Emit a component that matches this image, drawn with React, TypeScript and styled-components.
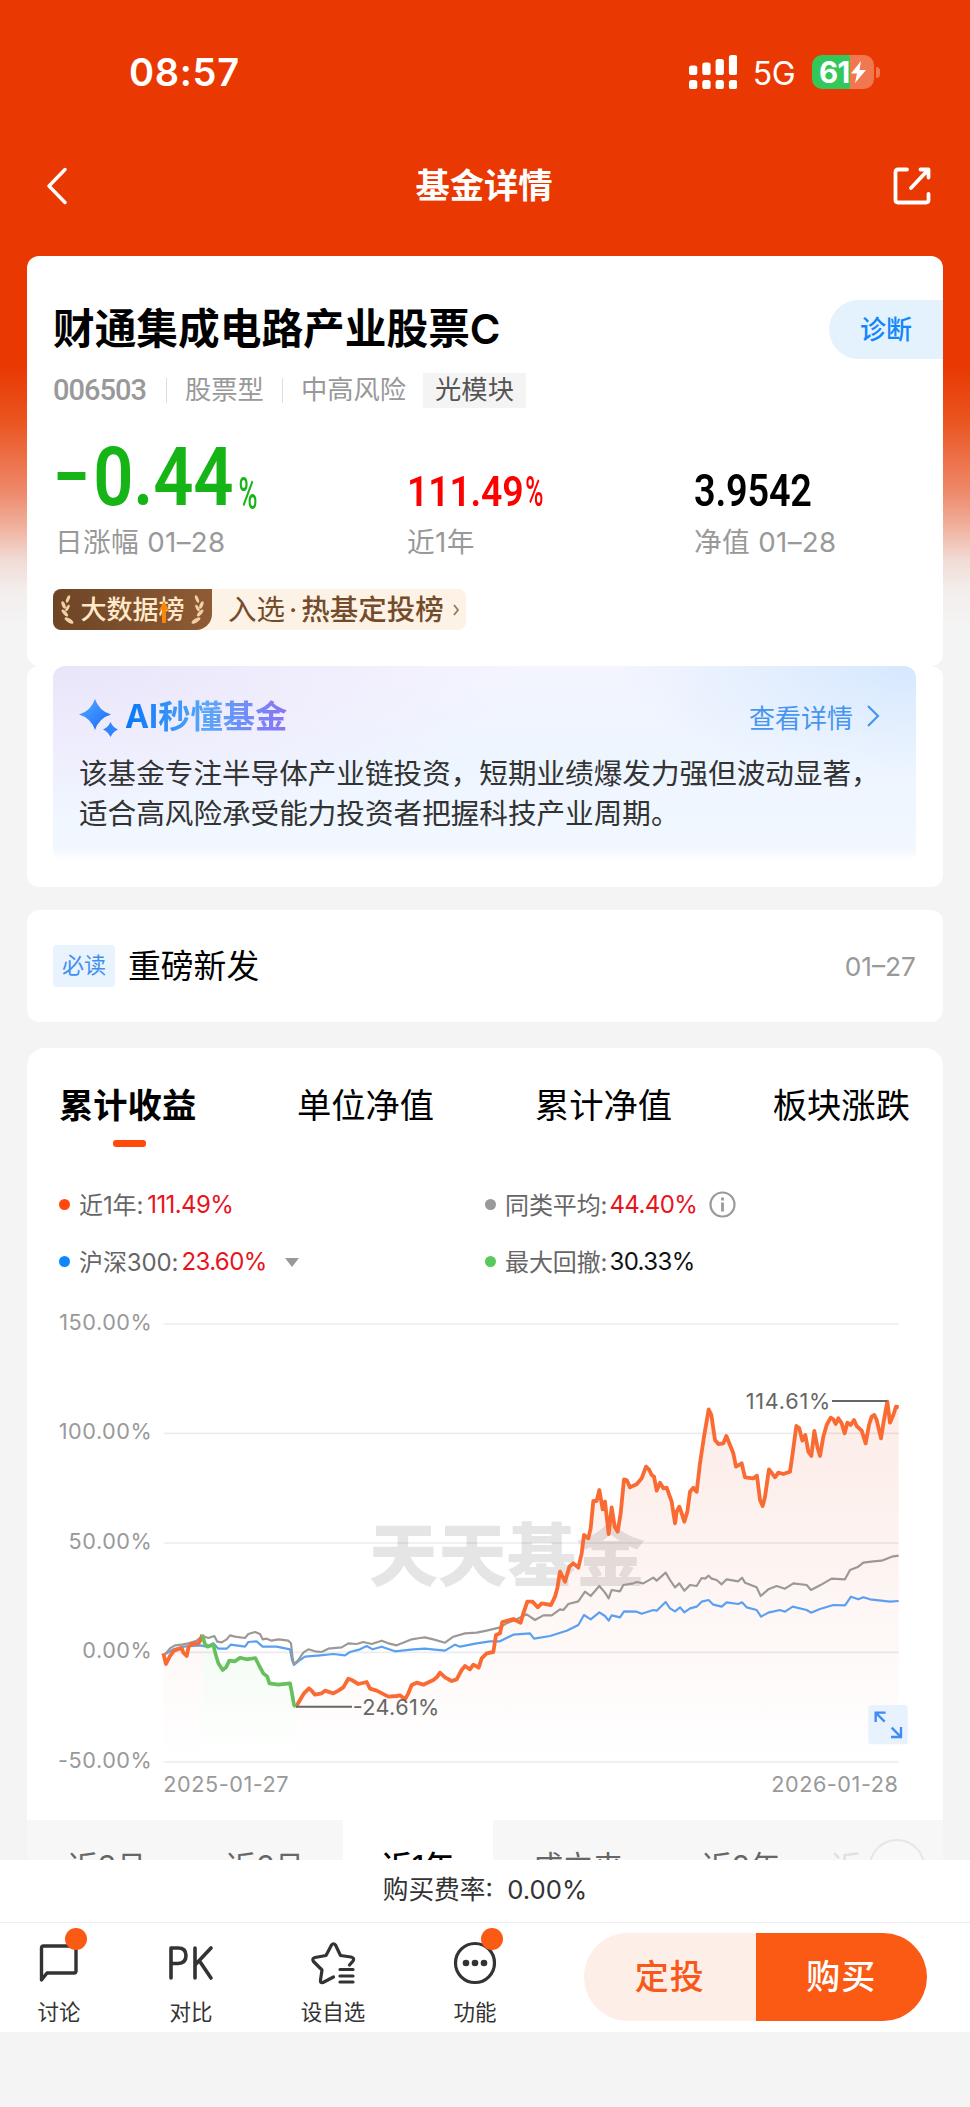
import React from "react";
import styled, { createGlobalStyle } from "styled-components";

const GlobalStyle = createGlobalStyle`
  * { box-sizing: border-box; }
  body {
    margin: 0;
    background: #f4f4f4;
    font-family: Inter, "Noto Sans CJK SC", sans-serif;
    color: #000;
  }
`;

/* ---------- shell ---------- */

const Screen = styled.div`
  width: 970px;
  height: 2107px;
  overflow: hidden;
  display: flex;
  flex-direction: column;
  background: linear-gradient(
    180deg,
    #e93802 0,
    #e93802 365px,
    #ea541f 420px,
    #ee8a6c 493px,
    #f0b5a3 530px,
    #f1dbd5 560px,
    #f3eeec 590px,
    #f4f4f4 625px
  );
`;

const Content = styled.main`
  height: 1860px;
  flex: none;
  overflow: hidden;
`;

const StatusBar = styled.div`
  height: 117px;
  padding: 27px 90px 0 129px;
  display: flex;
  align-items: center;
  color: #fff;
`;

const Clock = styled.span`
  flex: 1;
  font-size: 38px;
  font-weight: 600;
  letter-spacing: 0.7px;
`;

const Network = styled.span`
  margin: 4px 17px 0 16px;
  font-size: 32px;
  line-height: 36px;
  letter-spacing: -0.5px;
`;

const Battery = styled.span`
  width: 62px;
  height: 34px;
  padding-left: 7px;
  border-radius: 10px;
  display: flex;
  align-items: center;
  background: linear-gradient(90deg, #34c759 0 62%, #f17750 62%);
  font-size: 29.5px;
  font-weight: 700;
  letter-spacing: -0.6px;
`;

const BatteryTip = styled.span`
  width: 4px;
  height: 11px;
  margin-left: 2px;
  border-radius: 0 4px 4px 0;
  background: #f17750;
`;

const NavBar = styled.header`
  height: 139px;
  padding: 0 39px 2px 46px;
  display: flex;
  align-items: center;
  justify-content: space-between;
  color: #fff;
`;

const NavTitle = styled.h1`
  margin: 0 0 0 8px;
  font-size: 34.3px;
  font-weight: 600;
  line-height: 40px;
`;

/* ---------- cards ---------- */

const Card = styled.section<{ $height: number; $gap?: number; $radius?: number }>`
  height: ${(p) => p.$height}px;
  margin: ${(p) => p.$gap ?? 0}px 27px 0;
  border-radius: ${(p) => p.$radius ?? 12}px;
  background: #fff;
  overflow: hidden;
`;

const FundHead = styled.div`
  padding: 43px 0 0 26px;
  display: flex;
  justify-content: space-between;
  align-items: center;
`;

const FundName = styled.h2`
  margin: 0;
  font-size: 41.7px;
  font-weight: 600;
  line-height: 60px;
`;

const DiagnoseButton = styled.button`
  width: 114px;
  height: 59px;
  padding: 0 0 4px 31px;
  border: 0;
  border-radius: 30px 0 0 30px;
  background: #e4f2fe;
  color: #1187fb;
  font: inherit;
  font-size: 26px;
  font-weight: 500;
  text-align: left;
`;

const MetaRow = styled.div`
  height: 36px;
  margin-top: 13px;
  padding-left: 26px;
  display: flex;
  align-items: center;
  font-size: 26.3px;
  line-height: 36px;
  color: #999;
`;

const FundCode = styled.span`
  width: 95px;
  font-family: Roboto, sans-serif;
  font-size: 29px;
  font-weight: 500;
  letter-spacing: -1px;
`;

const MetaDivider = styled.i`
  width: 1px;
  height: 25px;
  margin: 0 18px;
  background: #ddd;
`;

const ThemeTag = styled.span`
  height: 35px;
  margin-left: 17px;
  padding: 0 12px;
  background: #f4f4f4;
  color: #555;
  line-height: 34px;
`;

const Metrics = styled.div`
  height: 153px;
  padding: 0 0 0 28px;
  display: grid;
  grid-template-columns: 352px 287px 1fr;
  align-items: end;
`;

const Metric = styled.div`
  display: flex;
  flex-direction: column;
`;

const MetricValue = styled.div<{ $color: string; $size: number; $drop?: number }>`
  height: ${(p) => p.$size}px;
  margin-bottom: ${(p) => -(p.$drop ?? 0)}px;
  display: flex;
  align-items: baseline;
  transform: scaleX(0.87);
  transform-origin: left;
  color: ${(p) => p.$color};
  font-family: Roboto, sans-serif;
  font-size: ${(p) => p.$size}px;
  font-weight: 600;
  line-height: ${(p) => p.$size}px;
  letter-spacing: -0.2px;
  white-space: nowrap;
`;

const Minus = styled.i`
  align-self: flex-start;
  width: 32px;
  height: 8px;
  margin: 35px 9px 0 3px;
  background: currentColor;
`;

const Percent = styled.span<{ $size: number; $gap: number; $drop?: number }>`
  margin: 0 0 ${(p) => -(p.$drop ?? 0)}px ${(p) => p.$gap}px;
  transform: translateY(${(p) => p.$drop ?? 0}px) scaleX(0.66);
  transform-origin: left;
  font-size: ${(p) => p.$size}px;
  font-weight: 500;
`;

const MetricLabel = styled.div`
  margin-top: 10px;
  color: #999;
  font-size: 27.7px;
  letter-spacing: 0.35px;
  line-height: 38px;
`;

const RankBadge = styled.div`
  width: 413px;
  height: 41px;
  margin: 28px 0 0 26px;
  border-radius: 8px;
  display: flex;
  align-items: center;
  overflow: hidden;
  background: #fcf2e6;
  color: #744c2b;
  font-size: 28.5px;
  line-height: 40px;
  white-space: nowrap;
`;

const RankSeal = styled.span`
  width: 159px;
  height: 41px;
  border-radius: 0 0 16px 0;
  display: flex;
  align-items: center;
  justify-content: center;
  gap: 5px;
  background: linear-gradient(90deg, #6d4526, #8f5b35);
  color: #ffe9c8;
  font-size: 26px;
  font-weight: 500;
`;

const SealText = styled.span`
  position: relative;
`;

const SealArrow = styled.svg`
  position: absolute;
  left: 77px;
  top: 9px;
`;

const RankText = styled.span`
  margin: 0 9px 0 16px;
  b { font-weight: 500; }
  i { margin: 0 4px; font-style: normal; }
`;

/* ---------- AI summary ---------- */

const Summary = styled.div`
  height: 196px;
  margin: 0 27px 0 26px;
  padding: 31px 36px 0 26px;
  border-radius: 12px;
  background:
    linear-gradient(0deg, #fff 0, rgba(255, 255, 255, 0) 14px),
    radial-gradient(ellipse 300px 110px at 100% 0, #d5e8ff, rgba(213, 232, 255, 0)),
    radial-gradient(ellipse 470px 150px at 0 0, #e8e5fa, rgba(240, 234, 252, 0.6) 60%, rgba(240, 240, 252, 0)),
    linear-gradient(180deg, #f4f5fe, #edf5ff 50%, #f3f8ff);
`;

const SummaryHead = styled.div`
  height: 40px;
  display: flex;
  align-items: center;
`;

const SummaryTitle = styled.h3`
  margin: 0;
  flex: 1;
  font-size: 32.3px;
  font-weight: 700;
  line-height: 40px;
  span {
    background: linear-gradient(90deg, #0877f8, #58a7f9 50%, #8a73f6);
    background-clip: text;
    color: transparent;
  }
`;

const DetailLink = styled.a`
  display: flex;
  align-items: center;
  gap: 13px;
  height: 38px;
  margin-top: -2px;
  color: #4795f0;
  font-size: 26px;
`;

const SummaryText = styled.p`
  margin: 17px 0 0;
  width: 830px;
  color: #333;
  font-size: 28.6px;
  line-height: 39.7px;
`;

/* ---------- notice ---------- */

const Notice = styled.div`
  height: 100%;
  padding: 0 27px 0 26px;
  display: flex;
  align-items: center;
`;

const MustRead = styled.span`
  width: 62px;
  height: 42px;
  border-radius: 4px;
  background: #e9f3fe;
  color: #3f8ff0;
  font-size: 22px;
  line-height: 41px;
  text-align: center;
`;

const NoticeTitle = styled.span`
  margin-left: 13px;
  padding-bottom: 5px;
  flex: 1;
  font-size: 32.8px;
`;

const NoticeDate = styled.span`
  color: #999;
  font-size: 26.3px;
`;

/* ---------- performance ---------- */

const Tabs = styled.nav`
  padding: 36px 33px 0 32px;
  display: flex;
  justify-content: space-between;
`;

const Tab = styled.div<{ $active?: boolean }>`
  display: flex;
  flex-direction: column;
  align-items: center;
  font-size: 34.3px;
  font-weight: ${(p) => (p.$active ? 700 : 400)};
  line-height: 44px;
  &::after {
    content: "";
    width: 33px;
    height: 7px;
    margin: 12px 0 0 3px;
    border-radius: 3px;
    background: ${(p) => (p.$active ? "#ff4a0c" : "transparent")};
  }
`;

const Legend = styled.div`
  padding: 29px 0 0 32px;
  display: grid;
  grid-template-columns: 426px 1fr;
  grid-auto-rows: 57px;
  align-items: center;
`;

const LegendItem = styled.div<{ $dot: string }>`
  display: flex;
  align-items: center;
  color: #666;
  font-size: 24px;
  letter-spacing: -0.1px;
  &::before {
    content: "";
    width: 11px;
    height: 11px;
    margin-right: 9px;
    border-radius: 50%;
    background: ${(p) => p.$dot};
  }
`;

const LegendLabel = styled.span`
  padding-bottom: 2px;
`;

const LegendValue = styled.span<{ $color: string; $gap: number }>`
  margin-left: ${(p) => p.$gap}px;
  letter-spacing: -0.6px;
  color: ${(p) => p.$color};
`;

const LegendIcon = styled.svg<{ $gap: number }>`
  margin-left: ${(p) => p.$gap}px;
`;

const ChartBox = styled.div`
  height: 530px;
  svg { display: block; }
`;

const Periods = styled.div`
  height: 60px;
  display: flex;
  background: #f7f7f7;
`;

const Period = styled.span<{ $width: number; $active?: boolean; $faded?: boolean }>`
  width: ${(p) => p.$width}px;
  height: 60px;
  padding-top: 26px;
  flex: none;
  background: ${(p) => (p.$active ? "#fff" : "transparent")};
  color: ${(p) => (p.$active ? "#000" : p.$faded ? "#e0e0e0" : "#666")};
  font-size: 30px;
  font-weight: ${(p) => (p.$active ? 500 : 400)};
  line-height: 40px;
  text-align: center;
`;

const MoreCircle = styled.span`
  width: 56px;
  height: 56px;
  margin: 19px 0 0 -4px;
  flex: none;
  border: 2px solid #e6e6e6;
  border-radius: 50%;
  background: #f8f8f8;
`;

/* ---------- bottom ---------- */

const FeeBar = styled.div`
  height: 63px;
  flex: none;
  border-bottom: 1.5px solid #eee;
  background: #fff;
  color: #333;
  font-size: 25.7px;
  line-height: 60px;
  text-align: center;
  white-space: pre;
`;

const Toolbar = styled.footer`
  height: 109px;
  flex: none;
  display: flex;
  padding: 10px 43px 0 0;
  background: #fff;
`;

const Tool = styled.div<{ $width: number }>`
  width: ${(p) => p.$width}px;
  display: flex;
  flex-direction: column;
  align-items: center;
  color: #333;
  font-size: 21.5px;
  line-height: 30px;
`;

const ToolIcon = styled.span`
  position: relative;
  width: 46px;
  height: 46px;
  margin: 7px 0 11px;
  display: flex;
  align-items: center;
  justify-content: center;
`;

const Dot = styled.i<{ $left: number }>`
  position: absolute;
  left: ${(p) => p.$left}px;
  top: -12px;
  width: 22px;
  height: 22px;
  border-radius: 50%;
  background: #fb5a14;
`;

const Actions = styled.div`
  width: 343px;
  height: 88px;
  margin-left: auto;
  border-radius: 44px;
  display: flex;
  overflow: hidden;
`;

const ActionButton = styled.button<{ $primary?: boolean }>`
  flex: 1;
  border: 0;
  padding: 0 0 5px;
  background: ${(p) => (p.$primary ? "#fb5a14" : "#fdeee7")};
  color: ${(p) => (p.$primary ? "#fff" : "#f8591a")};
  font: inherit;
  font-size: 34px;
  font-weight: 500;
  letter-spacing: 1px;
`;

/* ---------- chart data: drawn on a grid of three units per pixel ---------- */

const fundStart =
  "490,1060 498,1092 510,1068 522,1052 545,1044 550,1058 560,1068 566,1040 575,1032 595,1030 602,1020 607,1004";
const drawdown =
  "607,1004 614,1030 622,1040 640,1034 646,1060 655,1090 668,1110 678,1102 688,1082 705,1084 720,1073 740,1078 766,1074 778,1098 790,1120 802,1130 808,1150 835,1154 870,1150 876,1180 882,1215 888,1220";
const fundRest =
  "888,1220 900,1200 912,1180 927,1165 935,1172 945,1184 965,1180 975,1172 1000,1180 1015,1172 1030,1162 1045,1136 1055,1140 1075,1152 1100,1146 1110,1166 1130,1172 1165,1190 1190,1188 1200,1186 1215,1198 1225,1180 1235,1155 1250,1148 1270,1154 1300,1140 1312,1130 1320,1118 1335,1132 1355,1143 1370,1138 1385,1110 1395,1098 1410,1108 1420,1094 1436,1103 1445,1075 1460,1060 1480,1056 1488,1005 1500,1000 1507,966 1540,957 1562,968 1570,940 1582,905 1598,905 1613,922 1625,910 1653,915 1665,890 1672,865 1680,815 1695,845 1708,800 1720,790 1735,803 1745,760 1752,705 1765,715 1772,685 1780,603 1790,603 1798,570 1808,628 1815,605 1826,702 1835,622 1844,680 1853,695 1862,640 1872,538 1880,540 1890,562 1910,553 1925,535 1938,500 1947,508 1955,525 1962,530 1970,572 1980,548 1990,565 2000,563 2015,605 2025,670 2030,635 2038,620 2045,640 2053,665 2062,635 2070,575 2080,563 2090,575 2100,490 2112,410 2126,328 2134,345 2145,420 2155,432 2170,430 2179,408 2190,435 2200,460 2208,500 2225,490 2235,532 2260,535 2271,527 2280,600 2288,618 2295,590 2307,508 2325,532 2335,518 2350,522 2370,515 2378,460 2389,378 2398,385 2407,422 2416,405 2425,455 2434,468 2443,393 2452,440 2460,468 2470,410 2480,375 2492,353 2500,358 2507,372 2515,355 2525,370 2534,400 2542,368 2552,375 2562,360 2570,378 2585,392 2597,430 2607,375 2615,350 2623,345 2630,360 2643,415 2651,365 2662,305 2670,368 2680,345 2688,320 2696,322";
const peerAverage =
  "496,1062 510,1045 525,1036 545,1034 565,1030 590,1022 607,1008 625,1014 643,1008 652,1025 665,1027 680,1018 690,1006 705,1010 735,1014 745,1002 765,996 780,1002 788,1018 800,1016 815,1022 835,1018 865,1022 873,1030 878,1075 882,1092 895,1080 910,1058 925,1048 945,1054 965,1056 985,1046 1025,1042 1045,1030 1070,1032 1090,1026 1115,1032 1145,1022 1165,1030 1190,1036 1215,1026 1235,1018 1260,1014 1275,1012 1300,1018 1335,1028 1360,1010 1395,1000 1430,998 1460,992 1500,982 1520,970 1550,958 1580,943 1605,960 1630,946 1655,946 1680,928 1690,930 1705,912 1735,904 1755,875 1772,888 1798,858 1815,878 1826,895 1835,870 1860,874 1870,855 1900,850 1910,846 1930,850 1960,833 1970,842 1997,818 2010,840 2025,862 2038,850 2053,872 2070,855 2090,858 2105,834 2115,836 2126,827 2135,836 2150,840 2165,853 2180,838 2215,844 2226,833 2235,848 2270,862 2282,888 2305,868 2330,858 2355,866 2380,850 2420,855 2433,870 2460,856 2495,836 2535,838 2550,810 2575,800 2590,788 2620,784 2645,782 2675,770 2696,767";
const csi300 =
  "496,1062 520,1048 550,1040 600,1036 620,1040 640,1030 655,1046 680,1046 692,1034 735,1040 745,1026 770,1024 788,1040 830,1040 870,1048 876,1080 882,1095 900,1080 915,1070 960,1066 1000,1062 1035,1066 1050,1056 1080,1048 1100,1038 1118,1048 1145,1040 1185,1054 1240,1048 1275,1046 1335,1052 1365,1034 1380,1040 1430,1030 1470,1024 1500,1024 1540,1004 1590,1000 1602,1016 1650,1008 1700,992 1735,975 1752,945 1772,958 1798,937 1815,948 1826,962 1835,946 1860,952 1872,934 1910,935 1925,941 1960,930 1970,932 1997,906 2010,925 2025,934 2040,922 2053,937 2070,925 2090,920 2105,905 2126,900 2140,914 2165,920 2180,907 2215,912 2226,907 2240,922 2270,930 2283,950 2305,938 2340,930 2355,935 2378,920 2420,930 2433,938 2460,927 2500,915 2535,916 2553,890 2575,898 2590,892 2610,898 2670,905 2696,903";

const gridRows = [
  { y: 72, label: "150.00%" },
  { y: 400, label: "100.00%" },
  { y: 729, label: "50.00%" },
  { y: 1057, label: "0.00%" },
  { y: 1386, label: "-50.00%" },
];

const AxisText = styled.text`
  fill: #999;
  font-size: 65px;
  letter-spacing: 1.6px;
`;

const CalloutText = styled.text`
  fill: #666;
  font-size: 65px;
`;

const Watermark = styled.text`
  fill: rgba(0, 0, 0, 0.1);
  font-family: "Noto Sans CJK SC", sans-serif;
  font-size: 207px;
  font-weight: 900;
`;

function PerformanceChart() {
  return (
    <svg width="916" height="530" viewBox="81 -30 2748 1590">
      <defs>
        <linearGradient id="fundFill" gradientUnits="userSpaceOnUse" x1="0" y1="300" x2="0" y2="1386">
          <stop offset="0" stopColor="#fcece7" />
          <stop offset="0.4" stopColor="#fdf3f0" />
          <stop offset="0.75" stopColor="#fefaf9" />
          <stop offset="1" stopColor="#fff" />
        </linearGradient>
        <linearGradient id="drawdownFill" gradientUnits="userSpaceOnUse" x1="0" y1="1000" x2="0" y2="1386">
          <stop offset="0" stopColor="#f3fbf3" />
          <stop offset="1" stopColor="#fff" />
        </linearGradient>
      </defs>
      <polygon points={`490,1386 ${fundStart} 607,1386`} fill="url(#fundFill)" />
      <polygon points={`607,1386 ${drawdown} 888,1386`} fill="url(#drawdownFill)" />
      <polygon points={`888,1386 ${fundRest} 2696,1386`} fill="url(#fundFill)" />
      {gridRows.map((row) => (
        <React.Fragment key={row.label}>
          <line x1="491" x2="2697" y1={row.y} y2={row.y} stroke="#000" strokeOpacity="0.075" strokeWidth="5" />
          <AxisText x="457" y={row.y + 18} textAnchor="end">
            {row.label}
          </AxisText>
        </React.Fragment>
      ))}
      <Watermark x="1107" y="842">天天基金</Watermark>
      <g fill="none" strokeLinejoin="round">
        <polyline points={csi300} stroke="#5b9ff0" strokeWidth="6.5" />
        <polyline points={peerAverage} stroke="#9c9896" strokeWidth="6.5" />
        <polyline points={fundStart} stroke="#fa6b33" strokeWidth="11.5" />
        <polyline points={fundRest} stroke="#fa6b33" strokeWidth="11.5" />
        <polyline points={drawdown} stroke="#66c05c" strokeWidth="11" />
        <path d="M888 1220H1056M2496 303H2662" stroke="#666" strokeWidth="6" />
      </g>
      <CalloutText x="1058" y="1244" textLength="260">-24.61%</CalloutText>
      <CalloutText x="2237" y="328" textLength="254">114.61%</CalloutText>
      <rect x="2605" y="1215" width="118" height="118" rx="9" fill="#e8f1fe" />
      <path
        d="M2627 1266v-28h30M2629 1240l25 25M2703 1281v30h-30M2701 1309l-26-26"
        fill="none"
        stroke="#3f8cf3"
        strokeWidth="7"
      />
      <AxisText x="490" y="1476">2025-01-27</AxisText>
      <AxisText x="2695" y="1476" textAnchor="end">
        2026-01-28
      </AxisText>
    </svg>
  );
}

const Laurel = ({ flip }: { flip?: boolean }) => (
  <svg width="14" height="30" viewBox="0 0 14 30" fill="#f3cfa6">
    <g transform={flip ? "translate(14 0) scale(-1 1)" : undefined}>
      <ellipse cx="7" cy="4" rx="1.6" ry="4" transform="rotate(22 7 4)" />
      <ellipse cx="2.6" cy="10" rx="1.7" ry="4" transform="rotate(-22 2.6 10)" />
      <ellipse cx="6.5" cy="13" rx="1.5" ry="3.6" transform="rotate(28 6.5 13)" />
      <ellipse cx="3.8" cy="18" rx="1.7" ry="4.4" transform="rotate(-42 3.8 18)" />
      <ellipse cx="8" cy="25.5" rx="2" ry="5" transform="rotate(-58 8 25.5)" />
    </g>
  </svg>
);

const Signal = () => (
  <svg width="48" height="34" viewBox="0 0 48 34" fill="#fff">
    {[10.5, 7.5, 4, 0].map((top, i) => (
      <g key={top}>
        <rect x={i * 13.3} y={top} width="8.3" height={20 - top} rx="2.6" />
        <rect x={i * 13.3} y="25" width="8.3" height="9" rx="2.6" />
      </g>
    ))}
  </svg>
);

export default function App() {
  return (
    <Screen>
      <GlobalStyle />
      <Content>
        <StatusBar>
          <Clock>08:57</Clock>
          <Signal />
          <Network>5G</Network>
          <Battery>
            61
            <svg width="17" height="24" viewBox="0 0 17 24" fill="#fff">
              <path d="M11 1 1 13.5h6L5 23 16 10H9.5z" />
            </svg>
          </Battery>
          <BatteryTip />
        </StatusBar>
        <NavBar>
          <svg width="21" height="38" viewBox="0 0 21 38" fill="none" stroke="#fff" strokeWidth="3.4" strokeLinecap="round" strokeLinejoin="round">
            <path d="M19 2.5 3 19l16 16.5" />
          </svg>
          <NavTitle>基金详情</NavTitle>
          <svg width="38" height="38" viewBox="0 0 38 38" fill="none" stroke="#fff" strokeWidth="3.8" strokeLinecap="round" strokeLinejoin="round">
            <path d="M14 2.5H5Q2.500 2.500 2.500 5V33Q2.500 35.500 5 35.500H33Q35.500 35.500 35.500 33V27M27.500 2.500h8v8M35 3 18 21" />
          </svg>
        </NavBar>

        <Card $height={410}>
          <FundHead>
            <FundName>财通集成电路产业股票C</FundName>
            <DiagnoseButton>诊断</DiagnoseButton>
          </FundHead>
          <MetaRow>
            <FundCode>006503</FundCode>
            <MetaDivider />
            股票型
            <MetaDivider />
            中高风险
            <ThemeTag>光模块</ThemeTag>
          </MetaRow>
          <Metrics>
            <Metric>
              <MetricValue $color="#17b417" $size={81} $drop={5}>
                <Minus />
                0.44
                <Percent $size={45} $gap={6} $drop={4}>%</Percent>
              </MetricValue>
              <MetricLabel>日涨幅 01–28</MetricLabel>
            </Metric>
            <Metric>
              <MetricValue $color="#f00" $size={43}>
                111.49<Percent $size={43} $gap={2}>%</Percent>
              </MetricValue>
              <MetricLabel>近1年</MetricLabel>
            </Metric>
            <Metric>
              <MetricValue $color="#000" $size={43.5}>3.9542</MetricValue>
              <MetricLabel>净值 01–28</MetricLabel>
            </Metric>
          </Metrics>
          <RankBadge>
            <RankSeal>
              <Laurel />
              <SealText>
                大数据榜
                <SealArrow width="14" height="26" viewBox="0 0 14 26">
                  <path d="M7 2 12 11H9v13H5V11H2z" fill="#f98608" />
                </SealArrow>
              </SealText>
              <Laurel flip />
            </RankSeal>
            <RankText>
              入选<i>·</i><b>热基定投榜</b>
            </RankText>
            <svg width="7" height="12" viewBox="0 0 7 12" fill="none" stroke="#94795f" strokeWidth="1.8">
              <path d="m1 1 4 5-4 5" />
            </svg>
          </RankBadge>
        </Card>

        <Card $height={221}>
          <Summary>
            <SummaryHead>
              <svg width="46" height="42" viewBox="0 0 46 42">
                <defs>
                  <linearGradient id="spark" x1="0" x2="1" y1="0" y2="1">
                    <stop offset="0" stopColor="#58adff" />
                    <stop offset="1" stopColor="#1467fb" />
                  </linearGradient>
                </defs>
                <path d="M16 3Q20 15 32 18.500Q20 22 16 34Q12 22 0 18.500Q12 15 16 3Z" fill="url(#spark)" />
                <path d="M31.500 26Q34 31.500 39 33.500Q34 35.500 31.500 41Q29 35.500 24 33.500Q29 31.500 31.500 26Z" fill="#3385fb" />
              </svg>
              <SummaryTitle>
                <span>AI秒懂基金</span>
              </SummaryTitle>
              <DetailLink>
                查看详情
                <svg width="14" height="22" viewBox="0 0 14 22" fill="none" stroke="#4795f0" strokeWidth="2.2">
                  <path d="m2 1 10 10L2 21" />
                </svg>
              </DetailLink>
            </SummaryHead>
            <SummaryText>
              该基金专注半导体产业链投资，短期业绩爆发力强但波动显著，
              <br />
              适合高风险承受能力投资者把握科技产业周期。
            </SummaryText>
          </Summary>
        </Card>

        <Card $height={112} $gap={23}>
          <Notice>
            <MustRead>必读</MustRead>
            <NoticeTitle>重磅新发</NoticeTitle>
            <NoticeDate>01–27</NoticeDate>
          </Notice>
        </Card>

        <Card $height={832} $gap={26} $radius={18}>
          <Tabs>
            <Tab $active>累计收益</Tab>
            <Tab>单位净值</Tab>
            <Tab>累计净值</Tab>
            <Tab>板块涨跌</Tab>
          </Tabs>
          <Legend>
            <LegendItem $dot="#ff4a0c">
              <LegendLabel>近1年:</LegendLabel>
              <LegendValue $color="#e8141c" $gap={4}>111.49%</LegendValue>
            </LegendItem>
            <LegendItem $dot="#999">
              <LegendLabel>同类平均:</LegendLabel>
              <LegendValue $color="#e8141c" $gap={2}>44.40%</LegendValue>
              <LegendIcon $gap={12} width="27" height="27" viewBox="0 0 27 27" fill="none" stroke="#999" strokeWidth="2.2">
                <circle cx="13.500" cy="13.500" r="12" />
                <path d="M13.500 11.500v9M13.500 6.500v3" strokeWidth="2.800" />
              </LegendIcon>
            </LegendItem>
            <LegendItem $dot="#1187fb">
              <LegendLabel>沪深300:</LegendLabel>
              <LegendValue $color="#e8141c" $gap={3}>23.60%</LegendValue>
              <LegendIcon $gap={18} width="14" height="10" viewBox="0 0 14 10" fill="#999">
                <path d="M0 1h14L7 10z" />
              </LegendIcon>
            </LegendItem>
            <LegendItem $dot="#5ac85a">
              <LegendLabel>最大回撤:</LegendLabel>
              <LegendValue $color="#111" $gap={2}>30.33%</LegendValue>
            </LegendItem>
          </Legend>
          <ChartBox>
            <PerformanceChart />
          </ChartBox>
          <Periods>
            <Period $width={160}>近3月</Period>
            <Period $width={156}>近6月</Period>
            <Period $width={150} $active>近1年</Period>
            <Period $width={170}>成立来</Period>
            <Period $width={156}>近2年</Period>
            <Period $width={54} $faded>近</Period>
            <MoreCircle />
          </Periods>
        </Card>
      </Content>

      <FeeBar>购买费率:  0.00%</FeeBar>
      <Toolbar>
        <Tool $width={118}>
          <ToolIcon>
            <svg width="40" height="40" viewBox="0 0 40 40" fill="none" stroke="#333" strokeWidth="3.400" strokeLinejoin="round">
              <path d="M2.500 37V5Q2.500 3 4.500 3H35Q37 3 37 5V28Q37 30 35 30H8z" />
            </svg>
            <Dot $left={29} />
          </ToolIcon>
          讨论
        </Tool>
        <Tool $width={146}>
          <ToolIcon>
            <svg width="46" height="36" viewBox="0 0 46 36" fill="none" stroke="#333" strokeWidth="3.600" strokeLinecap="round" strokeLinejoin="round">
              <path d="M3 33V3H10Q18 3 18 10.500T10 18.500H3M27 3V33M43 3 27 20M31.500 16 43 33" />
            </svg>
          </ToolIcon>
          对比
        </Tool>
        <Tool $width={138}>
          <ToolIcon>
            <svg width="46" height="46" viewBox="0 0 46 46" fill="none" stroke="#333" strokeWidth="3.200" strokeLinecap="round" strokeLinejoin="round">
              <path d="M23.500 37 13 42.500Q10 43.500 10.500 40L12 30 3.500 21.500Q1.500 18.500 5 17.500L16 15.500 21.500 5Q23.500 2.500 25.500 5L30.500 15.500 41 17Q45 18 43 21L39.500 25" />
              <path d="M30 29.500H43M30 36H43M30 42H43" />
            </svg>
          </ToolIcon>
          设自选
        </Tool>
        <Tool $width={146}>
          <ToolIcon>
            <svg width="44" height="44" viewBox="0 0 44 44">
              <circle cx="22" cy="22" r="19.500" fill="none" stroke="#333" strokeWidth="3.200" />
              <g fill="#333">
                <circle cx="13" cy="22" r="3.300" />
                <circle cx="22" cy="22" r="3.300" />
                <circle cx="31" cy="22" r="3.300" />
              </g>
            </svg>
            <Dot $left={29} />
          </ToolIcon>
          功能
        </Tool>
        <Actions>
          <ActionButton>定投</ActionButton>
          <ActionButton $primary>购买</ActionButton>
        </Actions>
      </Toolbar>
    </Screen>
  );
}
